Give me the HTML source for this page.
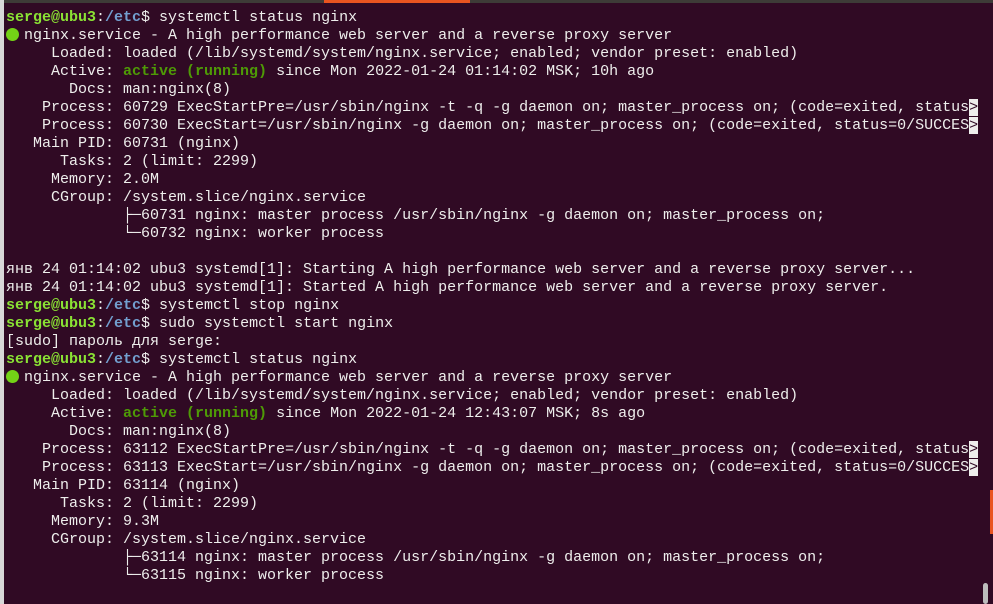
<!DOCTYPE html>
<html><head><meta charset="utf-8"><style>
html,body{margin:0;padding:0;width:993px;height:604px;overflow:hidden;background:#300a24;}
#top{position:absolute;left:0;top:0;width:993px;height:3px;background:#3d3b37;}
#tab{position:absolute;left:324px;top:0;width:146px;height:3px;background:#e95420;}
#left{position:absolute;left:0;top:0;width:4px;height:604px;background:#d8d8d8;}
#term{position:absolute;left:6px;top:9px;width:975px;height:595px;overflow:hidden;font-family:"Liberation Mono","DejaVu Sans Mono",monospace;font-size:15px;color:#eeeeec;}
.l{height:18px;line-height:18px;white-space:pre;overflow:hidden;}
.g{color:#8ae234;font-weight:bold}
.b{color:#729fcf;font-weight:bold}
.a{color:#4e9a06;font-weight:bold}
.c{background:#eeeeec;color:#300a24}
.dot{display:inline-block;width:13px;height:13px;border-radius:50%;background:#73d216;vertical-align:-2px;margin-right:5px;}
#sb{position:absolute;left:983px;top:583px;width:5px;height:21px;border-radius:3px;background:#bdbdbd;}
#or{position:absolute;left:990px;top:490px;width:3px;height:44px;background:#e95420;}
</style></head><body>
<div id="top"></div><div id="tab"></div><div id="left"></div>
<div id="term">
<div class="l"><span class="g">serge@ubu3</span>:<span class="b">/etc</span>$ systemctl status nginx</div>
<div class="l"><span class="dot"></span>nginx.service - A high performance web server and a reverse proxy server</div>
<div class="l">     Loaded: loaded (/lib/systemd/system/nginx.service; enabled; vendor preset: enabled)</div>
<div class="l">     Active: <span class="a">active (running)</span> since Mon 2022-01-24 01:14:02 MSK; 10h ago</div>
<div class="l">       Docs: man:nginx(8)</div>
<div class="l">    Process: 60729 ExecStartPre=/usr/sbin/nginx -t -q -g daemon on; master_process on; (code=exited, status<span class="c">&gt;</span></div>
<div class="l">    Process: 60730 ExecStart=/usr/sbin/nginx -g daemon on; master_process on; (code=exited, status=0/SUCCES<span class="c">&gt;</span></div>
<div class="l">   Main PID: 60731 (nginx)</div>
<div class="l">      Tasks: 2 (limit: 2299)</div>
<div class="l">     Memory: 2.0M</div>
<div class="l">     CGroup: /system.slice/nginx.service</div>
<div class="l">             ├─60731 nginx: master process /usr/sbin/nginx -g daemon on; master_process on;</div>
<div class="l">             └─60732 nginx: worker process</div>
<div class="l"> </div>
<div class="l">янв 24 01:14:02 ubu3 systemd[1]: Starting A high performance web server and a reverse proxy server...</div>
<div class="l">янв 24 01:14:02 ubu3 systemd[1]: Started A high performance web server and a reverse proxy server.</div>
<div class="l"><span class="g">serge@ubu3</span>:<span class="b">/etc</span>$ systemctl stop nginx</div>
<div class="l"><span class="g">serge@ubu3</span>:<span class="b">/etc</span>$ sudo systemctl start nginx</div>
<div class="l">[sudo] пароль для serge: </div>
<div class="l"><span class="g">serge@ubu3</span>:<span class="b">/etc</span>$ systemctl status nginx</div>
<div class="l"><span class="dot"></span>nginx.service - A high performance web server and a reverse proxy server</div>
<div class="l">     Loaded: loaded (/lib/systemd/system/nginx.service; enabled; vendor preset: enabled)</div>
<div class="l">     Active: <span class="a">active (running)</span> since Mon 2022-01-24 12:43:07 MSK; 8s ago</div>
<div class="l">       Docs: man:nginx(8)</div>
<div class="l">    Process: 63112 ExecStartPre=/usr/sbin/nginx -t -q -g daemon on; master_process on; (code=exited, status<span class="c">&gt;</span></div>
<div class="l">    Process: 63113 ExecStart=/usr/sbin/nginx -g daemon on; master_process on; (code=exited, status=0/SUCCES<span class="c">&gt;</span></div>
<div class="l">   Main PID: 63114 (nginx)</div>
<div class="l">      Tasks: 2 (limit: 2299)</div>
<div class="l">     Memory: 9.3M</div>
<div class="l">     CGroup: /system.slice/nginx.service</div>
<div class="l">             ├─63114 nginx: master process /usr/sbin/nginx -g daemon on; master_process on;</div>
<div class="l">             └─63115 nginx: worker process</div>
<div class="l"> </div>
<div class="l">янв 24 12:43:07 ubu3 systemd[1]: Starting A high performance web server and a reverse proxy server...</div>
</div>
<div id="sb"></div><div id="or"></div>
</body></html>
